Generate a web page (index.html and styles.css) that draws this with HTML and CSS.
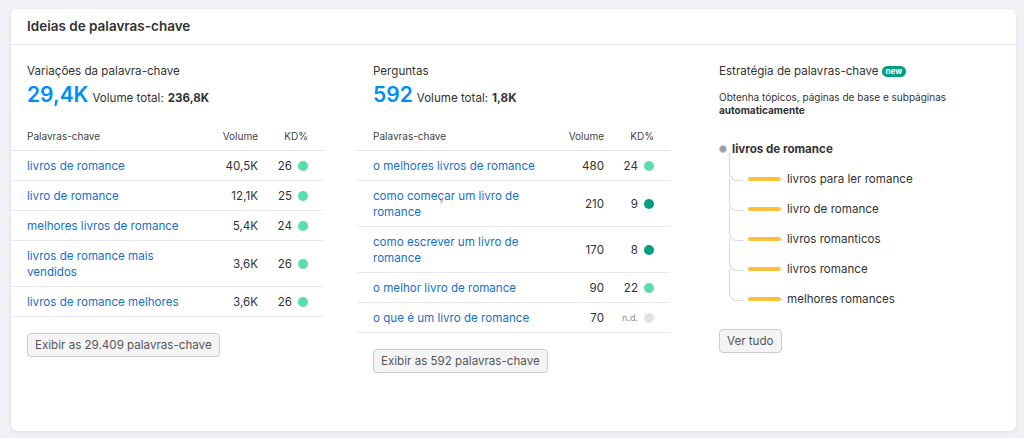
FILE: index.html
```html
<!DOCTYPE html>
<html lang="pt">
<head>
<meta charset="utf-8">
<title>Ideias de palavras-chave</title>
<link rel="stylesheet" href="styles.css">
</head>
<body>
<div class="card">
  <div class="card-header"><h2 class="card-title">Ideias de palavras-chave</h2></div>
  <div class="card-body">
    <section class="col">
      <h3 class="col-title">Variações da palavra-chave</h3>
      <div class="summary"><span class="big">29,4K</span><span class="vol-label">Volume total:</span><b class="vol-val">236,8K</b></div>
      <div class="kw-table">
        <div class="kw-row kw-head"><span>Palavras-chave</span><span class="num">Volume</span><span class="num">KD%</span></div>
        <div class="kw-row"><a class="kw" href="#">livros de romance</a><span class="num">40,5K</span><span class="kd">26<i class="dot easy"></i></span></div>
        <div class="kw-row"><a class="kw" href="#">livro de romance</a><span class="num">12,1K</span><span class="kd">25<i class="dot easy"></i></span></div>
        <div class="kw-row"><a class="kw" href="#">melhores livros de romance</a><span class="num">5,4K</span><span class="kd">24<i class="dot easy"></i></span></div>
        <div class="kw-row"><a class="kw" href="#">livros de romance mais vendidos</a><span class="num">3,6K</span><span class="kd">26<i class="dot easy"></i></span></div>
        <div class="kw-row"><a class="kw" href="#">livros de romance melhores</a><span class="num">3,6K</span><span class="kd">26<i class="dot easy"></i></span></div>
      </div>
      <button class="btn">Exibir as 29.409 palavras-chave</button>
    </section>

    <section class="col">
      <h3 class="col-title">Perguntas</h3>
      <div class="summary"><span class="big">592</span><span class="vol-label">Volume total:</span><b class="vol-val">1,8K</b></div>
      <div class="kw-table">
        <div class="kw-row kw-head"><span>Palavras-chave</span><span class="num">Volume</span><span class="num">KD%</span></div>
        <div class="kw-row"><a class="kw" href="#">o melhores livros de romance</a><span class="num">480</span><span class="kd">24<i class="dot easy"></i></span></div>
        <div class="kw-row"><a class="kw" href="#">como começar um livro de romance</a><span class="num">210</span><span class="kd">9<i class="dot very-easy"></i></span></div>
        <div class="kw-row"><a class="kw" href="#">como escrever um livro de romance</a><span class="num">170</span><span class="kd">8<i class="dot very-easy"></i></span></div>
        <div class="kw-row"><a class="kw" href="#">o melhor livro de romance</a><span class="num">90</span><span class="kd">22<i class="dot easy"></i></span></div>
        <div class="kw-row"><a class="kw" href="#">o que é um livro de romance</a><span class="num">70</span><span class="kd"><small class="nd">n.d.</small><i class="dot none"></i></span></div>
      </div>
      <button class="btn">Exibir as 592 palavras-chave</button>
    </section>

    <section class="col">
      <h3 class="col-title">Estratégia de palavras-chave <span class="badge">new</span></h3>
      <p class="desc">Obtenha tópicos, páginas de base e subpáginas <b>automaticamente</b></p>
      <div class="tree">
        <div class="tree-root"><i class="root-dot"></i><span>livros de romance</span></div>
        <ul class="tree-children">
          <li class="tree-item"><i class="bar"></i><span>livros para ler romance</span></li>
          <li class="tree-item"><i class="bar"></i><span>livro de romance</span></li>
          <li class="tree-item"><i class="bar"></i><span>livros romanticos</span></li>
          <li class="tree-item"><i class="bar"></i><span>livros romance</span></li>
          <li class="tree-item"><i class="bar"></i><span>melhores romances</span></li>
        </ul>
      </div>
      <button class="btn btn-tree">Ver tudo</button>
    </section>
  </div>
</div>
</body>
</html>
```

FILE: styles.css
```css
* { box-sizing: border-box; }

body {
  margin: 0;
  padding: 9px 8px 7px 11px;
  background: #f0f1f5;
  font-family: Inter, "Noto Sans", "Liberation Sans", sans-serif;
  color: #333;
}

.card {
  height: 422px;
  background: #fff;
  border-radius: 6px;
  box-shadow: 0 1px 3px rgba(20, 30, 60, 0.10);
}

.card-header {
  height: 36px;
  padding: 0 16px;
  border-bottom: 1px solid #e7e8ee;
}

.card-title {
  margin: 0;
  line-height: 35px;
  font-size: 13.5px;
  font-weight: 600;
  color: #333;
}

.card-body {
  display: grid;
  grid-template-columns: repeat(3, 1fr);
  column-gap: 33px;
  padding-top: 18px;
}

.col {
  padding: 0 16px;
  display: flex;
  flex-direction: column;
  align-items: flex-start;
}

.col-title {
  margin: 0;
  font-size: 11.6px;
  line-height: 16px;
  font-weight: 400;
  color: #333;
  display: flex;
  align-items: center;
}

.badge {
  margin-left: 3px;
  display: inline-block;
  height: 11px;
  padding: 0 4px;
  border-radius: 6px;
  background: #009f81;
  color: #fff;
  font-size: 8px;
  font-weight: 700;
  line-height: 11px;
}

.summary {
  margin-top: 3px;
  line-height: 26px;
  display: flex;
  align-items: baseline;
  font-size: 11.6px;
}

.big {
  font-size: 21px;
  font-weight: 600;
  color: #008ff8;
  margin-right: 4px;
}

.vol-label { margin-right: 4px; }
.vol-val { font-weight: 700; }

.kw-table {
  margin: 18px -16px 0;
  align-self: stretch;
}

.kw-row {
  display: grid;
  grid-template-columns: 1fr 52px 50px;
  align-items: center;
  padding: 7px 16px 6px;
  font-size: 11.6px;
  line-height: 16px;
  border-bottom: 1px solid #e9eaef;
}

.kw-head {
  padding-top: 0;
  padding-bottom: 7px;
  font-size: 10px;
  line-height: 14px;
  color: #444;
  border-bottom: 1px solid #e0e1e7;
}

.kw {
  color: #1870cc;
  text-decoration: none;
  padding-right: 8px;
}

.num { text-align: right; }

.kd {
  display: flex;
  justify-content: flex-end;
  align-items: center;
}

.dot {
  width: 10px;
  height: 10px;
  border-radius: 50%;
  margin-left: 6px;
}

.dot.easy { background: #59ddaa; }
.dot.very-easy { background: #009f81; }
.dot.none { background: #e0e1e9; }

.nd {
  font-size: 9px;
  color: #8b8d97;
}

.btn {
  margin-top: 16px;
  height: 24px;
  padding: 0 7px;
  background: #f4f4f6;
  border: 1px solid #c9cbd3;
  border-radius: 4px;
  font-family: inherit;
  font-size: 11.6px;
  color: #555;
}

.btn-tree { margin-top: 15px; }

.desc {
  margin: 12px 0 0;
  font-size: 10px;
  line-height: 13px;
  color: #333;
}

.desc b { font-weight: 700; }

.tree { margin-top: 17px; }

.tree-root {
  height: 30px;
  display: flex;
  align-items: center;
  font-size: 11.6px;
  font-weight: 700;
  color: #333;
}

.root-dot {
  width: 8px;
  height: 8px;
  border-radius: 50%;
  background: #9a9ca7;
  border: 1px solid #c6c8d0;
  margin-right: 5px;
}

.tree-children {
  list-style: none;
  margin: 0 0 0 10px;
  padding: 0;
}

.tree-item {
  position: relative;
  height: 30px;
  display: flex;
  align-items: center;
  padding-left: 19px;
  font-size: 11.6px;
  color: #333;
}

.tree-item::before {
  content: "";
  position: absolute;
  left: 0;
  top: -15px;
  width: 13px;
  height: 31px;
  border-left: 1px solid #d6d7de;
  border-bottom: 1px solid #d6d7de;
  border-bottom-left-radius: 8px;
}

.tree-item:first-child::before {
  top: -11px;
  height: 27px;
}

.bar {
  width: 33px;
  height: 4px;
  border-radius: 2px;
  background: #fcc13b;
  margin-right: 6px;
}
```
